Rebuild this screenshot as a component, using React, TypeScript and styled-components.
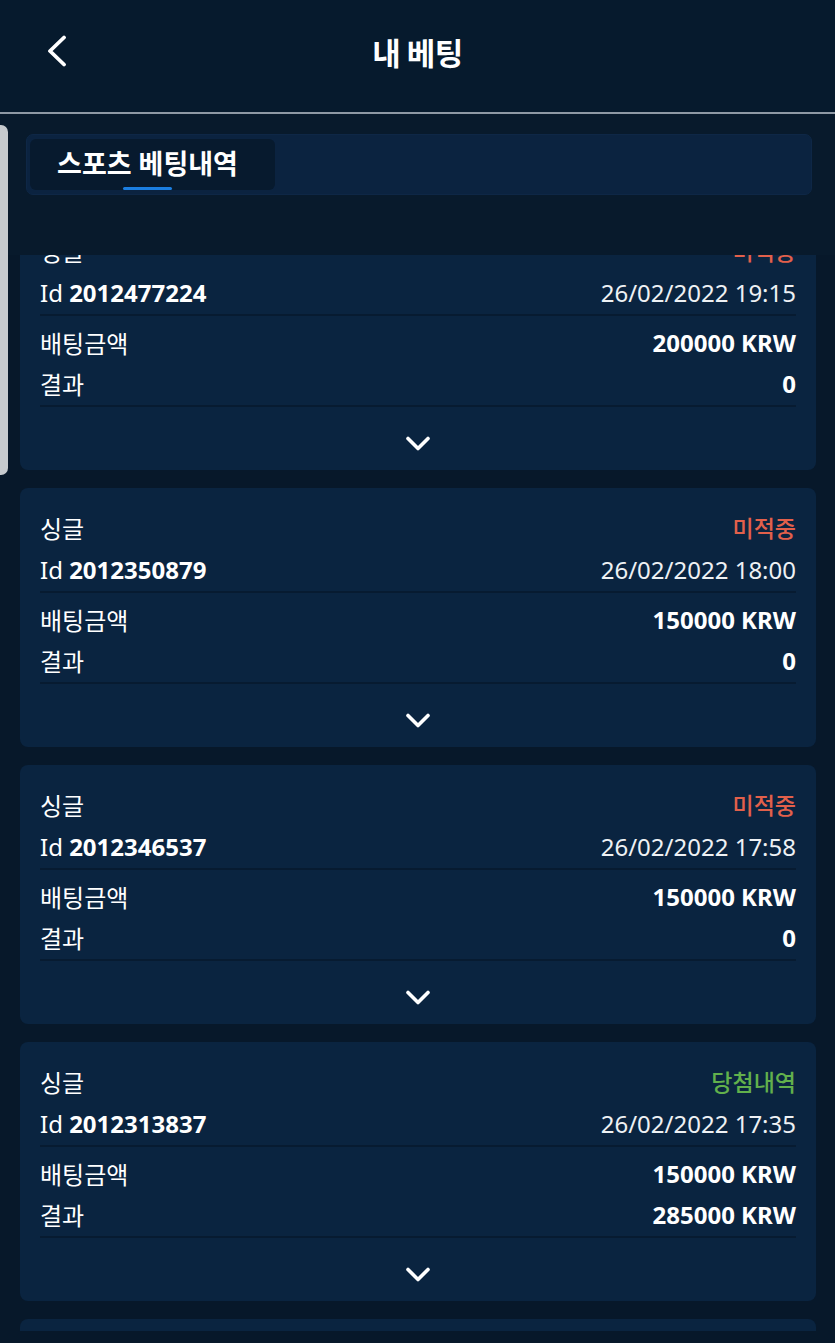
import { useLayoutEffect, useRef } from 'react';
import styled, { createGlobalStyle } from 'styled-components';

type Bet = {
  id: string;
  type: string;
  status: 'lost' | 'won';
  date: string;
  stake: string;
  result: string;
};

const bets: Bet[] = [
  { id: '2012477224', type: '싱글', status: 'lost', date: '26/02/2022 19:15', stake: '200000 KRW', result: '0' },
  { id: '2012350879', type: '싱글', status: 'lost', date: '26/02/2022 18:00', stake: '150000 KRW', result: '0' },
  { id: '2012346537', type: '싱글', status: 'lost', date: '26/02/2022 17:58', stake: '150000 KRW', result: '0' },
  { id: '2012313837', type: '싱글', status: 'won', date: '26/02/2022 17:35', stake: '150000 KRW', result: '285000 KRW' },
  { id: '2012298114', type: '싱글', status: 'lost', date: '26/02/2022 17:10', stake: '100000 KRW', result: '0' },
];

const statusText = { lost: '미적중', won: '당첨내역' };

export default function App() {
  const listRef = useRef<HTMLDivElement>(null);

  // the list is shown scrolled a little, as in the screen
  useLayoutEffect(() => {
    if (listRef.current) listRef.current.scrollTop = 44;
  }, []);

  return (
    <Page>
      <GlobalStyle />
      <Header>
        <BackButton aria-label="back">
          <svg width="24" height="32" viewBox="0 0 24 32" fill="none">
            <polyline points="20 2.5 6 16 20 29.5" stroke="#fff" strokeWidth="3.8" strokeLinecap="round" strokeLinejoin="round" />
          </svg>
        </BackButton>
        <Title>내 베팅</Title>
        <span />
      </Header>
      <TabSection>
        <TabBar>
          <Tab>
            <TabLabel>스포츠 베팅내역</TabLabel>
            <TabIndicator />
          </Tab>
        </TabBar>
      </TabSection>
      <List ref={listRef}>
        {bets.map((bet) => (
          <Card key={bet.id}>
            <Row>
              <Label>{bet.type}</Label>
              <Status $status={bet.status}>{statusText[bet.status]}</Status>
            </Row>
            <Row>
              <Label>
                Id <Strong>{bet.id}</Strong>
              </Label>
              <DateText>{bet.date}</DateText>
            </Row>
            <Divider />
            <Row $top={5}>
              <Label>배팅금액</Label>
              <Strong>{bet.stake}</Strong>
            </Row>
            <Row $height={41}>
              <Label>결과</Label>
              <Strong>{bet.result}</Strong>
            </Row>
            <Divider />
            <Footer>
              <svg width="24" height="24" viewBox="0 0 24 24" fill="none">
                <polyline points="2 6.5 12 16.5 22 6.5" stroke="#fff" strokeWidth="3.6" strokeLinecap="round" strokeLinejoin="round" />
              </svg>
            </Footer>
          </Card>
        ))}
      </List>
      <ScrollThumb />
    </Page>
  );
}

const GlobalStyle = createGlobalStyle`
  html, body {
    margin: 0;
    padding: 0;
    background: #07182a;
  }
  body {
    font-family: 'Noto Sans', 'Noto Sans CJK KR', sans-serif;
    color: #ffffff;
  }
  * { box-sizing: border-box; }
`;

const Page = styled.div`
  position: relative;
  width: 835px;
  height: 1343px;
  overflow: hidden;
  background: #07182a;
`;

const Header = styled.header`
  display: grid;
  grid-template-columns: 1fr auto 1fr;
  align-items: center;
  height: 114px;
  padding-bottom: 2px;
  background: #061a2d;
  border-bottom: 2px solid #8e99a5;
`;

const BackButton = styled.button`
  justify-self: start;
  display: flex;
  margin-left: 44px;
  margin-top: -8px;
  padding: 0;
  border: 0;
  background: none;
`;

const Title = styled.h1`
  margin: -8px 0 0;
  font-family: 'Noto Sans CJK KR', sans-serif;
  font-size: 31px;
  font-weight: 700;
  letter-spacing: -0.5px;
`;

const TabSection = styled.div`
  padding: 20px 23px 60px 26px;
  background: #081a2c;
`;

const TabBar = styled.div`
  display: flex;
  height: 61px;
  padding: 4px 3px;
  background: #0b2340;
  border: 1px solid #0e2746;
  border-radius: 7px;
`;

const Tab = styled.div`
  display: flex;
  flex-direction: column;
  align-items: center;
  width: 245px;
  padding: 7px 36px 0 26px;
  background: #071a2e;
  border-radius: 6px;
`;

const TabLabel = styled.span`
  font-size: 27px;
  line-height: 36px;
  font-weight: 700;
  white-space: nowrap;
`;

const TabIndicator = styled.div`
  width: 49px;
  height: 4px;
  margin-top: 5px;
  background: #1b7ee0;
  border-radius: 2px;
`;

const List = styled.div`
  display: flex;
  flex-direction: column;
  gap: 18px;
  height: 1076px;
  padding: 0 19px 0 20px;
  overflow-y: auto;
  scrollbar-width: none;
  &::-webkit-scrollbar { display: none; }
`;

const Card = styled.section`
  flex-shrink: 0;
  padding: 18px 20px 0;
  background: #0a2440;
  border-radius: 8px;
`;

const Row = styled.div<{ $height?: number; $top?: number }>`
  display: flex;
  justify-content: space-between;
  align-items: center;
  height: ${(p) => p.$height ?? 42}px;
  margin-top: ${(p) => p.$top ?? 0}px;
  font-size: 24px;
`;

const Label = styled.span`
  font-weight: 400;
`;

const Strong = styled.span`
  font-weight: 700;
`;

const DateText = styled.span`
  color: #eef1f4;
`;

const Status = styled.span<{ $status: 'lost' | 'won' }>`
  font-family: 'Noto Sans CJK KR', sans-serif;
  font-size: 23px;
  font-weight: 500;
  color: ${(p) => (p.$status === 'won' ? '#62b04c' : '#e2604b')};
`;

const Divider = styled.div`
  height: 2px;
  margin-top: 1px;
  background: #071b31;
`;

const Footer = styled.div`
  display: flex;
  justify-content: center;
  padding: 25px 0 14px;
`;

const ScrollThumb = styled.div`
  position: absolute;
  left: 0;
  top: 125px;
  width: 8px;
  height: 350px;
  background: #c6cace;
  border-radius: 0 7px 7px 0;
`;
